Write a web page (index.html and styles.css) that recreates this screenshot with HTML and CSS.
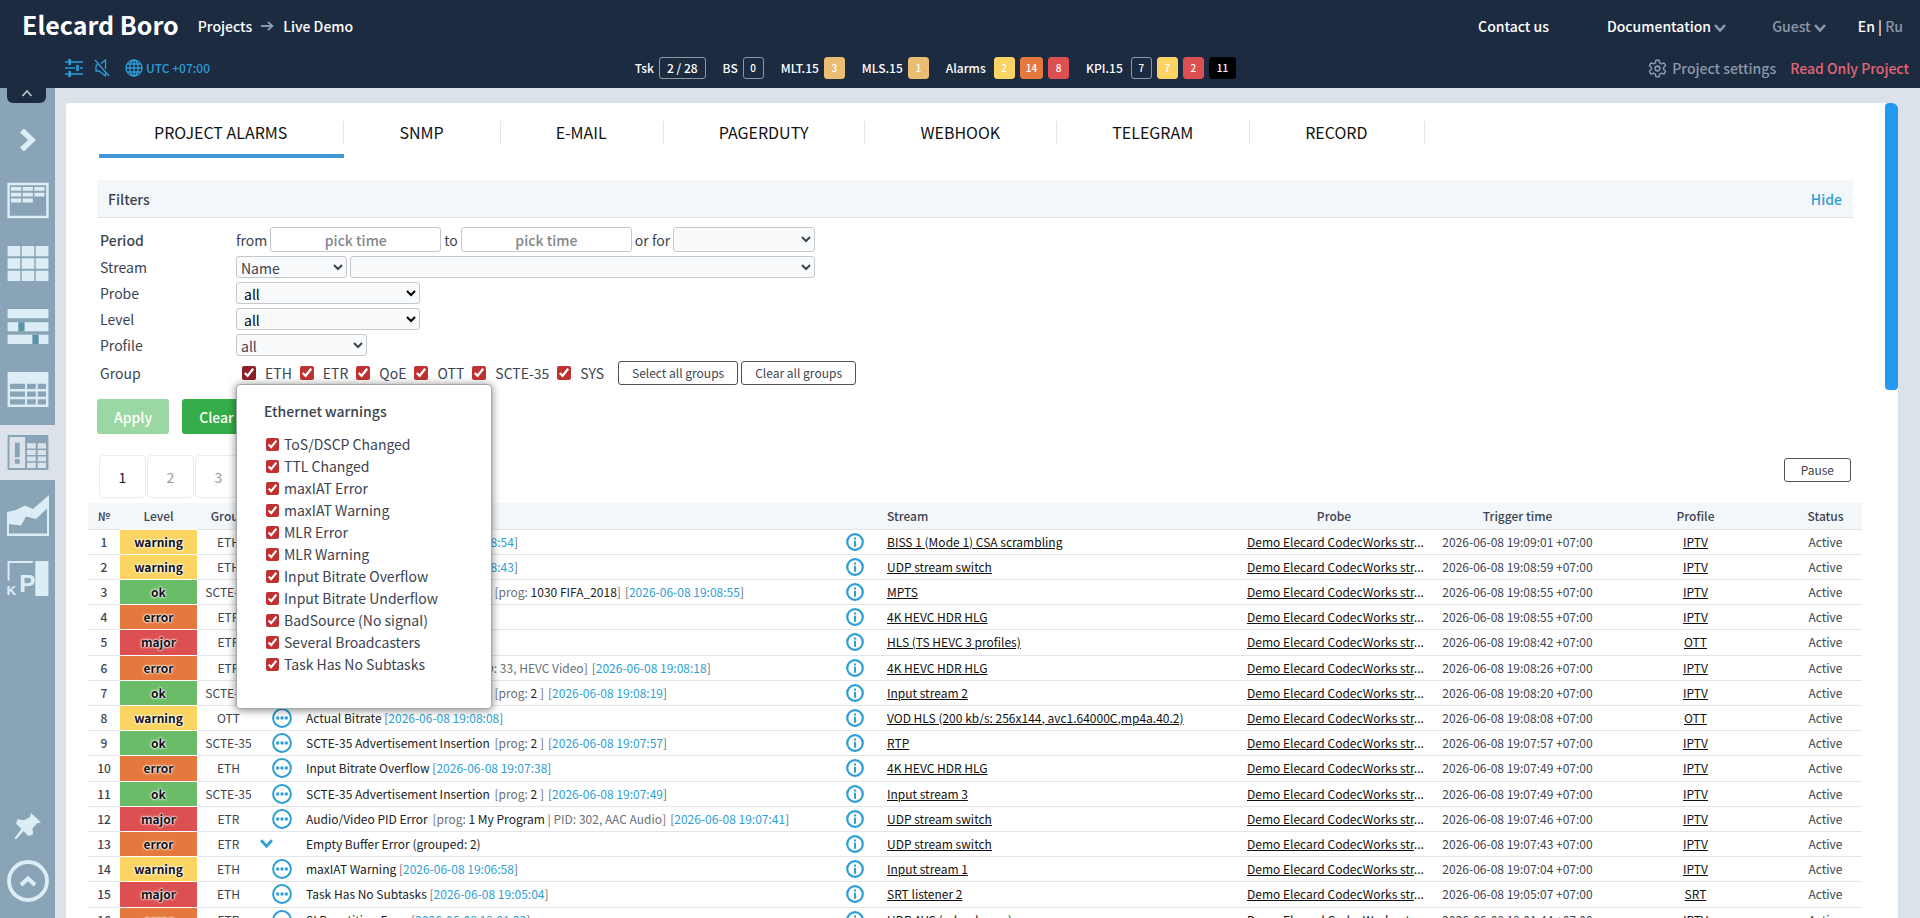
FILE: index.html
```
<!DOCTYPE html>
<html lang="en">
<head>
    <meta charset="UTF-8">
    <meta name="viewport" content="width=device-width, initial-scale=1.0">
    <title>Elecard Boro - Project alarms</title>
    <link rel="stylesheet" href="styles.css">
</head>
<body>
    <!-- shared icons -->
    <svg class="icon-defs" aria-hidden="true">
        <symbol id="i-chevron" viewBox="0 0 12 8">
            <path d="M1 1l5 5.500L11 1" fill="none" stroke="currentColor" stroke-width="2.600"/>
        </symbol>
        <symbol id="i-dots" viewBox="0 0 20 20">
            <circle cx="10" cy="10" r="8.900" fill="none" stroke="currentColor" stroke-width="2"/>
            <circle cx="5.700" cy="10" r="1.700"/><circle cx="10" cy="10" r="1.700"/><circle cx="14.300" cy="10" r="1.700"/>
        </symbol>
        <symbol id="i-info" viewBox="0 0 18 18">
            <circle cx="9" cy="9" r="7.800" fill="none" stroke="currentColor" stroke-width="2.200"/>
            <path d="M8 4.500h2v2H8zM8 7.700h2v6H8z"/>
        </symbol>
    </svg>

    <header class="header">
        <div class="header-top">
            <a class="logo" href="#">Elecard Boro</a>
            <nav class="breadcrumbs">
                <a href="#">Projects</a>
                <svg class="crumb-arrow" viewBox="0 0 13 10"><path d="M0 5h11M7 1l4.500 4L7 9" fill="none" stroke="currentColor" stroke-width="1.800"/></svg>
                <a href="#">Live Demo</a>
            </nav>
            <div class="header-links">
                <a href="#" class="link-contact">Contact us</a>
                <a href="#" class="link-docs">Documentation <svg class="chevron"><use href="#i-chevron"/></svg></a>
                <a href="#" class="link-guest">Guest <svg class="chevron"><use href="#i-chevron"/></svg></a>
                <div class="lang"><a href="#">En</a> | <a href="#" class="muted">Ru</a></div>
            </div>
        </div>
        <div class="header-bottom">
            <div class="tools">
                <svg class="tool-icon outline" viewBox="0 0 18 18" stroke-width="1.400">
                    <path d="M0 3h3.500M6 3h12M0 9h10M15 9h3M0 15h3.500M6 15h12"/>
                    <path d="M4.700 0v6M4.700 12v6M12.500 6v6" stroke-width="2.600"/>
                </svg>
                <svg class="tool-icon outline" viewBox="0 0 18 18" stroke-width="1.300">
                    <path d="M4.500 4.500L2 7v5h3l6.500 5v-5M7 4.500L11.500 1v9M1 1l14 16"/>
                </svg>
                <a href="#" class="timezone">
                    <svg class="tool-icon outline" viewBox="0 0 18 18" stroke-width="1.300">
                        <circle cx="9" cy="9" r="8"/><ellipse cx="9" cy="9" rx="4.200" ry="8"/>
                        <path d="M9 1v16M1 9h16M2.300 5h13.400M2.300 13h13.400"/>
                    </svg>
                    UTC +07:00
                </a>
            </div>
            <div class="stats">
                <div class="stat"><span>Tsk</span><b class="box box-lg">2 / 28</b></div>
                <div class="stat"><span>BS</span><b class="box">0</b></div>
                <div class="stat"><span>MLT.15</span><b class="box tan">3</b></div>
                <div class="stat"><span>MLS.15</span><b class="box tan">1</b></div>
                <div class="stat multi"><span>Alarms</span><b class="box yellow">2</b><b class="box orange">14</b><b class="box red">8</b></div>
                <div class="stat multi"><span>KPI.15</span><b class="box">7</b><b class="box yellow">7</b><b class="box red">2</b><b class="box black">11</b></div>
            </div>
            <div class="project-links">
                <a href="#" class="settings">
                    <svg class="gear outline" viewBox="0 0 24 24" stroke-width="1.900" stroke-linejoin="round">
                        <circle cx="12" cy="12" r="3"/>
                        <path d="M10 1.500h4l.700 3.300 2.300 1.300 3.200-1.100 2 3.500-2.500 2.200v2.600l2.500 2.200-2 3.500-3.200-1.100-2.300 1.300-.700 3.300h-4l-.700-3.300L7 17.900l-3.200 1.100-2-3.500 2.500-2.200v-2.600L1.800 8.500l2-3.500L7 6.100l2.300-1.300z"/>
                    </svg>
                    Project settings
                </a>
                <span class="read-only">Read Only Project</span>
            </div>
        </div>
    </header>

    <div class="page">
        <aside class="sidebar">
            <button class="collapse" aria-label="Collapse header">
                <svg viewBox="0 0 12 8"><path d="M1.500 7L6 2l4.500 5" fill="none" stroke="currentColor" stroke-width="1.800"/></svg>
            </button>
            <button class="expand" aria-label="Expand menu">
                <svg viewBox="0 0 18 24"><path d="M3 2.500L13 12 3 21.500" fill="none" stroke="currentColor" stroke-width="5.500"/></svg>
            </button>
            <nav class="side-nav">
                <a href="#" aria-label="Dashboard">
                    <svg viewBox="0 0 42 36">
                        <path d="M1 1h40v34H1z" fill="none" stroke="currentColor" stroke-width="2.500"/>
                        <path d="M3.500 4H14v4H3.500zM15.500 4H26v4H15.500zM27.500 4H38v4H27.500zM3.500 10H14v4H3.500zM15.500 10H26v4H15.500zM27.500 10H38v4H27.500zM3.500 16H14v4H3.500zM15.500 16H26v4H15.500z"/>
                    </svg>
                </a>
                <a href="#" aria-label="Mosaic">
                    <svg viewBox="0 0 42 36"><path d="M0 0h13v10.500H0zM14.500 0h13v10.500h-13zM29 0h13v10.500H29zM0 12.500h13v11H0zM14.500 12.500h13v11h-13zM29 12.500h13v11H29zM0 25.500h13V36H0zM14.500 25.500h13V36h-13zM29 25.500h13V36H29z"/></svg>
                </a>
                <a href="#" aria-label="Timeline">
                    <svg viewBox="0 0 42 36">
                        <path d="M0 0h42v9.500H0zM0 13.500h42V23H0zM0 26.500h42V36H0z"/>
                        <path d="M11 13.500h6.500V23H11zM25.500 26.500H32V36h-6.500z" fill="#5b94a9"/>
                    </svg>
                </a>
                <a href="#" aria-label="Streams">
                    <svg viewBox="0 0 42 36"><path fill-rule="evenodd" d="M0 0h42v36H0zM2.500 12v5.500H18V12zM20 12v5.500h9V12zM31 12v5.500h8.500V12zM2.500 20v5.500H18V20zM20 20v5.500h9V20zM31 20v5.500h8.500V20zM2.500 28v5.500H18V28zM20 28v5.500h9V28zM31 28v5.500h8.500V28z"/></svg>
                </a>
                <a href="#" class="active" aria-label="Alarms">
                    <svg viewBox="0 0 42 36">
                        <path fill-rule="evenodd" d="M0 0h42v36H0zM2 2v32h16V2zM20 8.500V14h9V8.500zM31 8.500V14h8.500V8.500zM20 15.500v5h9v-5zM31 15.500v5h8.500v-5zM20 22v5h9v-5zM31 22v5h8.500v-5zM20 28.500V34h9v-5.500zM31 28.500V34h8.500v-5.500z"/>
                        <path d="M7.500 8h5v15h-5zM7.500 25h5v4.500h-5z"/>
                    </svg>
                </a>
                <a href="#" aria-label="Charts">
                    <svg class="tall" viewBox="0 0 42 41"><path d="M0 17l9-2 9-4.500 8 3.500L42 0v41H0zM2 29v9.500h38V13.500L29 24l-10-2.500-5 9z" fill-rule="evenodd"/></svg>
                </a>
                <a href="#" aria-label="KPI" class="kpi">
                    <svg viewBox="0 0 42 36">
                        <path d="M0 0h26v2H2v18H0zM28.500 0H42v36H28.500z"/>
                        <text x="-1" y="35" font-size="14">K</text>
                        <text x="12" y="32" font-size="25">P</text>
                    </svg>
                </a>
            </nav>
            <div class="side-bottom">
                <button class="pin" aria-label="Pin menu"><svg viewBox="0 0 26 26"><path d="M16 0l10 9.500-4 .800-4.500 5.200.500 6-4.500 1.500-5-5L1.500 26H0v-1.500l6.500-8.500L1 10.500l1.500-4.200 6.500 1L15 4z"/></svg></button>
                <button class="to-top" aria-label="Back to top"><svg viewBox="0 0 42 42"><circle cx="21" cy="21" r="19" fill="none" stroke="currentColor" stroke-width="3.800"/><path d="M14 25l7-6.500 7 6.500" fill="none" stroke="currentColor" stroke-width="4"/></svg></button>
            </div>
        </aside>

        <main class="panel">
            <nav class="tabs">
                <a href="#" class="active">PROJECT ALARMS</a>
                <a href="#">SNMP</a>
                <a href="#">E-MAIL</a>
                <a href="#">PAGERDUTY</a>
                <a href="#">WEBHOOK</a>
                <a href="#">TELEGRAM</a>
                <a href="#">RECORD</a>
            </nav>

            <div class="filters-title">
                <h2>Filters</h2>
                <a href="#">Hide</a>
            </div>

            <form class="filters">
                <label for="from" class="strong">Period</label>
                <div class="field">
                    <label for="from">from</label>
                    <input type="text" id="from" class="time" placeholder="pick time">
                    <label for="to">to</label>
                    <input type="text" id="to" class="time" placeholder="pick time">
                    <label for="period">or for</label>
                    <select id="period" class="w-period"><option></option></select>
                </div>

                <label for="streamBy">Stream</label>
                <div class="field">
                    <select id="streamBy" class="w-name"><option>Name</option></select>
                    <select id="stream" class="w-stream" aria-label="Stream name"><option></option></select>
                </div>

                <label for="probe">Probe</label>
                <div class="field"><select id="probe" class="w-probe dark"><option>all</option></select></div>

                <label for="level">Level</label>
                <div class="field"><select id="level" class="w-probe dark"><option>all</option></select></div>

                <label for="profile">Profile</label>
                <div class="field"><select id="profile" class="w-profile"><option>all</option></select></div>

                <span>Group</span>
                <div class="field groups">
                    <label class="hovered"><input type="checkbox" checked>ETH</label>
                    <label><input type="checkbox" checked>ETR</label>
                    <label><input type="checkbox" checked>QoE</label>
                    <label><input type="checkbox" checked>OTT</label>
                    <label><input type="checkbox" checked>SCTE-35</label>
                    <label><input type="checkbox" checked>SYS</label>
                    <div class="group-buttons">
                        <button type="button" class="btn-outline">Select all groups</button>
                        <button type="button" class="btn-outline">Clear all groups</button>
                    </div>

                    <div class="popup">
                        <h3>Ethernet warnings</h3>
                        <label><input type="checkbox" checked>ToS/DSCP Changed</label>
                        <label><input type="checkbox" checked>TTL Changed</label>
                        <label><input type="checkbox" checked>maxIAT Error</label>
                        <label><input type="checkbox" checked>maxIAT Warning</label>
                        <label><input type="checkbox" checked>MLR Error</label>
                        <label><input type="checkbox" checked>MLR Warning</label>
                        <label><input type="checkbox" checked>Input Bitrate Overflow</label>
                        <label><input type="checkbox" checked>Input Bitrate Underflow</label>
                        <label><input type="checkbox" checked>BadSource (No signal)</label>
                        <label><input type="checkbox" checked>Several Broadcasters</label>
                        <label><input type="checkbox" checked>Task Has No Subtasks</label>
                    </div>
                </div>
            </form>

            <div class="actions">
                <button class="btn-green" disabled>Apply</button>
                <button class="btn-green">Clear filters</button>
            </div>

            <div class="table-bar">
                <div class="pagination">
                    <button class="current">1</button>
                    <button>2</button>
                    <button>3</button>
                </div>
                <button class="btn-outline">Pause</button>
            </div>

            <table class="alarms">
                <colgroup>
                    <col class="c-num"><col class="c-level"><col class="c-group"><col class="c-icon"><col>
                    <col class="c-info"><col class="c-stream"><col class="c-probe"><col class="c-time"><col class="c-profile"><col class="c-status">
                </colgroup>
                <thead>
                    <tr>
                        <th>№</th><th>Level</th><th>Group</th><th></th><th></th><th></th>
                        <th class="left">Stream</th><th>Probe</th><th>Trigger time</th><th>Profile</th><th>Status</th>
                    </tr>
                </thead>
                <tbody id="alarmRows"></tbody>
            </table>
            <div class="scroll-thumb"></div>
        </main>
    </div>

    <script src="alarms.js"></script>
</body>
</html>
```
FILE: alarms.js
```
// level, group, event, details, event time, stream, trigger time, profile
const alarms = [
    ['warning', 'ETH', 'maxIAT Warning', '', '19:08:54', 'BISS 1 (Mode 1) CSA scrambling', '19:09:01', 'IPTV'],
    ['warning', 'ETH', 'maxIAT Warning', '', '19:08:43', 'UDP stream switch', '19:08:59', 'IPTV'],
    ['ok', 'SCTE-35', 'SCTE-35 Advertisement Insertion', '[prog: <b>1030 FIFA_2018</b>]', '19:08:55', 'MPTS', '19:08:55', 'IPTV'],
    ['error', 'ETR', 'Empty Buffer Error (grouped: 2)', '', '', '4K HEVC HDR HLG', '19:08:55', 'IPTV'],
    ['major', 'ETR', 'PID Error (grouped: 2)', '', '', 'HLS (TS HEVC 3 profiles)', '19:08:42', 'OTT'],
    ['error', 'ETR', 'PTS Error', '[prog: <b>1 Program 1</b> | PID: 33, HEVC Video]', '19:08:18', '4K HEVC HDR HLG', '19:08:26', 'IPTV'],
    ['ok', 'SCTE-35', 'SCTE-35 Advertisement Insertion', '[prog: <b>2</b> ]', '19:08:19', 'Input stream 2', '19:08:20', 'IPTV'],
    ['warning', 'OTT', 'Actual Bitrate', '', '19:08:08', 'VOD HLS (200 kb/s: 256x144, avc1.64000C,mp4a.40.2)', '19:08:08', 'OTT'],
    ['ok', 'SCTE-35', 'SCTE-35 Advertisement Insertion', '[prog: <b>2</b> ]', '19:07:57', 'RTP', '19:07:57', 'IPTV'],
    ['error', 'ETH', 'Input Bitrate Overflow', '', '19:07:38', '4K HEVC HDR HLG', '19:07:49', 'IPTV'],
    ['ok', 'SCTE-35', 'SCTE-35 Advertisement Insertion', '[prog: <b>2</b> ]', '19:07:49', 'Input stream 3', '19:07:49', 'IPTV'],
    ['major', 'ETR', 'Audio/Video PID Error', '[prog: <b>1 My Program</b> | PID: 302, AAC Audio]', '19:07:41', 'UDP stream switch', '19:07:46', 'IPTV'],
    ['error', 'ETR', 'Empty Buffer Error (grouped: 2)', '', '', 'UDP stream switch', '19:07:43', 'IPTV'],
    ['warning', 'ETH', 'maxIAT Warning', '', '19:06:58', 'Input stream 1', '19:07:04', 'IPTV'],
    ['major', 'ETH', 'Task Has No Subtasks', '', '19:05:04', 'SRT listener 2', '19:05:07', 'SRT'],
    ['error', 'ETR', 'SI Repetition Error', '', '19:01:23', 'UDP AVC (reload once)', '19:01:44', 'IPTV']
];

const day = '2026-06-08';

document.getElementById('alarmRows').innerHTML = alarms.map((a, i) => {
    const [level, group, event, details, time, stream, trigger, profile] = a;
    // grouped alarms have no time of their own, they get an expand arrow
    const icon = time
        ? '<svg class="dots"><use href="#i-dots"/></svg>'
        : '<svg class="unfold"><use href="#i-chevron"/></svg>';
    return `<tr>
        <td class="num">${i + 1}</td>
        <td class="level ${level}">${level}</td>
        <td>${group}</td>
        <td class="icon-cell">${icon}</td>
        <td class="event">${event} ${details ? `<span class="details">${details}</span>` : ''}${time ? `<span class="time">[<i>${day} ${time}</i>]</span>` : ''}</td>
        <td class="icon-cell"><svg class="info"><use href="#i-info"/></svg></td>
        <td class="left"><a href="#">${stream}</a></td>
        <td class="probe"><a href="#">Demo Elecard CodecWorks str</a>...</td>
        <td>${day} ${trigger} +07:00</td>
        <td><a href="#">${profile}</a></td>
        <td>Active</td>
    </tr>`;
}).join('');
```
FILE: styles.css
```
:root {
    --header: #1d2b41;
    --side: #8aa4b7;
    --side-icon: #dcedf5;
    --page: #dbe2e9;
    --text: #3c4450;
    --muted: #8b98a9;
    --blue: #2b9fd6;
    --light: #f4f7fa;
    --line: #e3e6e8;
    --yellow: #fcd462;
    --orange: #e5783d;
    --red: #dc5052;
    --green: #6bbc69;
}

* {
    box-sizing: border-box;
}

body {
    margin: 0;
    height: 100vh;
    display: flex;
    flex-direction: column;
    overflow: hidden;
    background: var(--page);
    color: var(--text);
    font-family: "Noto Sans CJK SC", sans-serif;
    font-size: 14px;
    line-height: 20px;
}

a {
    color: inherit;
    text-decoration: none;
}

button, input, select {
    font: inherit;
    color: inherit;
    margin: 0;
}

button {
    cursor: pointer;
}

svg {
    fill: currentColor;
    flex: none;
}

.outline {
    fill: none;
    stroke: currentColor;
}

.icon-defs {
    position: absolute;
    width: 0;
    height: 0;
}

/* header */
.header {
    flex: none;
    height: 88px;
    background: var(--header);
    color: #fff;
    font-weight: 500;
}

.header-top {
    display: flex;
    align-items: center;
    height: 52px;
    padding: 0 17px 0 22px;
}

.logo {
    padding-bottom: 4px;
    font-size: 25px;
    font-weight: 700;
}

.breadcrumbs {
    display: flex;
    align-items: center;
    gap: 9px;
    margin-left: 19px;
}

.crumb-arrow {
    width: 13px;
    height: 10px;
    color: var(--muted);
}

.header-links {
    display: flex;
    align-items: center;
    margin-left: auto;
}

.link-docs {
    margin-left: 58px;
}

.link-guest {
    margin: 0 32px 0 46px;
    color: var(--muted);
}

.chevron {
    width: 12px;
    height: 8px;
    color: var(--muted);
}

.muted {
    color: var(--muted);
}

.header-bottom {
    display: grid;
    grid-template-columns: 1fr auto 1fr;
    align-items: center;
    height: 32px;
    padding-right: 11px;
}

.tools {
    display: flex;
    align-items: center;
    gap: 11px;
    padding-left: 65px;
    color: var(--blue);
    font-size: 12px;
}

.tool-icon {
    width: 18px;
    height: 18px;
}

.timezone {
    display: flex;
    align-items: center;
    gap: 3px;
    margin-left: 2px;
}

.stats {
    display: flex;
    gap: 17px;
    margin-right: 38px;
    font-size: 12px;
}

.stat {
    display: flex;
    align-items: center;
    gap: 5px;
}

.stat.multi span {
    margin-right: 3px;
}

.box {
    min-width: 21px;
    height: 22px;
    padding: 0 5px;
    border: 1px solid #8c97a6;
    border-radius: 3px;
    font-size: 10px;
    font-weight: 500;
    line-height: 20px;
    text-align: center;
}

.box-lg {
    padding: 0 7px;
    font-size: 12px;
}

.tan { background: #e9bd72; border-color: #e9bd72; }
.yellow { background: #fad463; border-color: #fad463; }
.orange { background: var(--orange); border-color: var(--orange); }
.red { background: var(--red); border-color: var(--red); }
.black { padding: 0 7px; background: #000; border-color: #000; }

.project-links {
    display: flex;
    justify-content: flex-end;
    gap: 14px;
}

.settings {
    display: flex;
    align-items: center;
    gap: 5px;
    color: var(--muted);
}

.gear {
    width: 19px;
    height: 19px;
}

.read-only {
    color: #e06774;
}

/* sidebar */
.page {
    flex: 1;
    display: flex;
    min-height: 0;
}

.sidebar {
    flex: none;
    display: flex;
    flex-direction: column;
    align-items: center;
    width: 55px;
    background: var(--side);
    color: var(--side-icon);
}

.sidebar button {
    display: flex;
    align-items: center;
    justify-content: center;
    padding: 0;
    border: 0;
    background: none;
}

.sidebar .collapse {
    width: 39px;
    height: 15px;
    margin-right: 2px;
    border-radius: 0 0 6px 6px;
    background: var(--header);
    color: #b4bfcc;
}

.collapse svg {
    width: 12px;
    height: 8px;
    margin-bottom: 6px;
}

.sidebar .expand {
    margin: 25px 0 21px;
}

.expand svg {
    width: 18px;
    height: 24px;
}

.side-nav {
    display: flex;
    flex-direction: column;
    gap: 8px;
    width: 100%;
}

.side-nav a {
    display: flex;
    align-items: center;
    justify-content: center;
    height: 55px;
}

.side-nav svg {
    width: 42px;
    height: 35px;
    overflow: visible;
}

.side-nav .tall {
    height: 41px;
}

.side-nav text {
    font-family: "Liberation Sans", sans-serif;
    font-weight: 700;
}

.side-nav .active {
    background: var(--page);
    color: var(--side);
}

.side-bottom {
    display: flex;
    flex-direction: column;
    align-items: center;
    gap: 21px;
    margin-top: auto;
    padding-bottom: 16px;
}

.pin svg {
    width: 26px;
    height: 26px;
}

.to-top svg {
    width: 42px;
    height: 42px;
}

/* main panel */
.panel {
    position: relative;
    flex: 1;
    min-width: 0;
    margin: 15px 22px 0 11px;
    padding: 0 36px 0 22px;
    overflow: hidden;
    border-radius: 3px 6px 0 0;
    background: #fff;
}

.scroll-thumb {
    position: absolute;
    top: 0;
    right: 0;
    width: 13px;
    height: 287px;
    border-radius: 4px;
    background: #2499f0;
}

.tabs {
    display: flex;
    padding: 14px 11px 0;
    color: #111;
    font-size: 16px;
}

.tabs a {
    display: flex;
    height: 41px;
    padding-top: 4px;
    border-bottom: 4px solid transparent;
    line-height: 22px;
}

.tabs a::before {
    content: "";
    width: 55px;
}

.tabs a::after {
    content: "";
    width: 56px;
    height: 23px;
    border-right: 1px solid #e4e6e8;
}

.tabs .active {
    border-color: #4298d5;
}

.filters-title {
    display: flex;
    align-items: center;
    justify-content: space-between;
    height: 38px;
    margin: 22px 9px 9px;
    padding: 0 11px;
    background: var(--light);
    border-bottom: 1px solid #dfe3e7;
}

.filters-title h2 {
    margin: 0;
    font-size: 14px;
    font-weight: 500;
}

.filters-title a {
    color: var(--blue);
    font-weight: 500;
}

.filters {
    display: grid;
    grid-template-columns: 136px 1fr;
    align-items: center;
    row-gap: 4px;
    padding-left: 12px;
}

.strong {
    font-weight: 500;
}

.field {
    display: flex;
    align-items: center;
    gap: 3px;
}

.field select {
    height: 22px;
    border: 1px solid #c4c8cc;
    border-radius: 3px;
    background: #f8fafc;
    line-height: 18px;
}

.field .time {
    width: 171px;
    height: 25px;
    border: 1px solid #c4c8cc;
    border-radius: 3px;
    text-align: center;
    font-weight: 500;
}

.time::placeholder {
    color: #83878c;
}

.field .w-period {
    width: 142px;
    height: 25px;
}

.w-name { width: 111px; }
.w-stream { width: 465px; }
.w-probe { width: 184px; }
.w-profile { width: 131px; }

.dark {
    color: #000;
    padding-left: 3px;
}

.groups {
    position: relative;
    gap: 8px;
    height: 26px;
    padding-left: 6px;
}

.groups label {
    display: flex;
    align-items: center;
    gap: 9px;
}

input[type="checkbox"] {
    width: 14px;
    height: 14px;
    accent-color: #c03232;
}

.hovered input[type="checkbox"] {
    accent-color: #8f1f26;
}

.btn-outline {
    height: 24px;
    padding: 0 13px;
    border: 1px solid #4b525c;
    border-radius: 3px;
    background: #fff;
    font-size: 12px;
    line-height: 20px;
}

.group-buttons {
    display: flex;
    gap: 3px;
    margin-left: 6px;
}

.table-bar .btn-outline {
    margin-top: 3px;
    padding: 0 16px;
}

.popup {
    position: absolute;
    top: 24px;
    left: 0;
    z-index: 10;
    width: 256px;
    height: 325px;
    padding: 16px 27px;
    border: 1px solid #a5a8ab;
    border-radius: 4px;
    background: #fff;
    box-shadow: 0 1px 8px rgba(0, 0, 0, 0.5);
}

.popup h3 {
    margin: 0 0 12px;
    font-size: 14px;
    font-weight: 500;
}

.popup label {
    gap: 5px;
    height: 22px;
    padding-left: 2px;
}

.popup input[type="checkbox"] {
    width: 13px;
    height: 13px;
}

.actions {
    display: flex;
    gap: 13px;
    margin: 13px 9px 21px;
}

.btn-green {
    height: 35px;
    padding: 0 17px;
    border: 0;
    border-radius: 3px;
    background: #35ae49;
    color: #fff;
    font-weight: 500;
}

.btn-green:disabled {
    background: #9ad7a3;
}

.table-bar {
    display: flex;
    align-items: flex-start;
    justify-content: space-between;
    height: 48px;
    padding: 0 11px;
}

.pagination {
    display: flex;
    gap: 1px;
}

.pagination button {
    width: 47px;
    height: 43px;
    border: 1px solid #ececec;
    border-radius: 4px;
    background: #fff;
    color: #999;
}

.pagination .current {
    color: #222;
}

/* alarms table */
.alarms {
    width: 100%;
    table-layout: fixed;
    border-collapse: collapse;
    font-size: 12px;
    line-height: 18px;
}

.c-num { width: 32px; }
.c-level { width: 77px; }
.c-group { width: 63px; }
.c-icon { width: 44px; }
.c-info { width: 38px; }
.c-stream { width: 361px; }
.c-probe { width: 198px; }
.c-time { width: 169px; }
.c-profile { width: 187px; }
.c-status { width: 73px; }

.alarms th {
    height: 26px;
    padding: 0;
    background: var(--light);
    font-weight: 500;
}

.alarms td {
    height: 25px;
    padding: 0;
    border-top: 1px solid var(--line);
    text-align: center;
    white-space: nowrap;
}

.alarms tr:nth-child(5n) td {
    height: 26px;
}

.alarms .left {
    padding-left: 13px;
    text-align: left;
}

.alarms td a {
    color: #111;
    text-decoration: underline;
}

.alarms .num {
    font-weight: 500;
}

.alarms .level {
    border-top-color: #fff;
    color: #111;
    font-weight: 700;
    text-shadow: 0 0 2px #fff, 0 0 2px #fff, 0 0 3px #fff;
}

.warning { background: var(--yellow); }
.ok { background: var(--green); }
.error { background: var(--orange); }
.major { background: var(--red); }

.icon-cell svg {
    display: block;
    margin: 0 auto;
    color: var(--blue);
}

.dots {
    width: 20px;
    height: 20px;
}

.info {
    width: 18px;
    height: 18px;
}

.icon-cell .unfold {
    width: 13px;
    height: 9px;
    margin-left: 0;
}

.alarms .event {
    padding-left: 2px;
    color: #222;
    text-align: left;
}

.details {
    margin: 0 4px 0 2px;
    color: #6a7077;
}

.details b {
    color: #222;
    font-weight: 400;
}

.event .time {
    color: #6a7077;
}

.event .time i {
    color: var(--blue);
    font-style: normal;
}

.alarms .probe {
    padding-left: 12px;
    color: #111;
    text-align: left;
}
```
